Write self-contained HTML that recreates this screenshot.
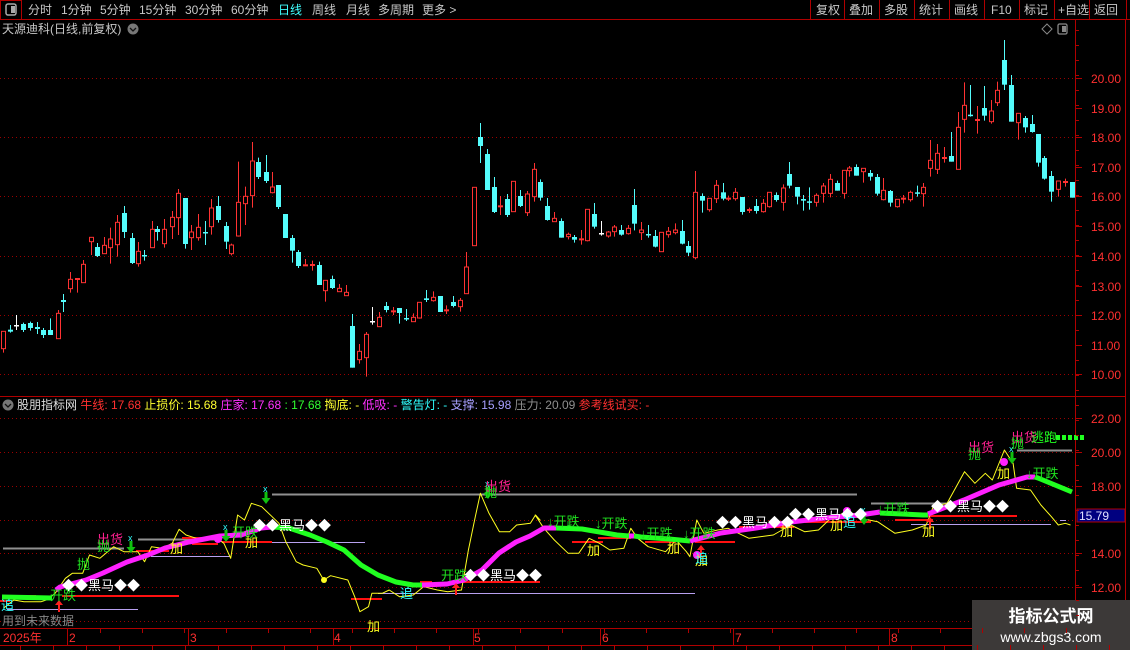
<!DOCTYPE html>
<html><head><meta charset="utf-8">
<style>
html,body{margin:0;padding:0;background:#000;width:1130px;height:650px;overflow:hidden;font-family:"Liberation Sans","Noto Sans CJK SC",sans-serif;}
#wrap{position:relative;width:1130px;height:650px;}
.t{position:absolute;font-size:12px;color:#c8c8c8;white-space:nowrap;line-height:14px;}
svg{position:absolute;left:0;top:0;}
</style></head><body><div id="wrap">
<svg id="s" width="1130" height="650" xmlns="http://www.w3.org/2000/svg" font-family="Liberation Sans, Noto Sans CJK SC, sans-serif">
<!-- frame lines -->
<line x1="0" y1="19.5" x2="1130" y2="19.5" stroke="#b00000"/>
<rect x="0.5" y="0.5" width="21" height="19" fill="none" stroke="#b00000"/>
<rect x="6" y="4" width="10" height="11" rx="2" fill="none" stroke="#aaa" stroke-width="1.5"/>
<rect x="11" y="6" width="4" height="7" fill="#aaa"/>
<g stroke="#b00000"><line x1="810.5" y1="0" x2="810.5" y2="19"/><line x1="844.5" y1="0" x2="844.5" y2="19"/><line x1="879.5" y1="0" x2="879.5" y2="19"/><line x1="914.5" y1="0" x2="914.5" y2="19"/><line x1="949.5" y1="0" x2="949.5" y2="19"/><line x1="984.5" y1="0" x2="984.5" y2="19"/><line x1="1019.5" y1="0" x2="1019.5" y2="19"/><line x1="1054.5" y1="0" x2="1054.5" y2="19"/><line x1="1089.5" y1="0" x2="1089.5" y2="19"/><line x1="1126.5" y1="0" x2="1126.5" y2="19"/></g>
<line x1="1075.5" y1="20" x2="1075.5" y2="628" stroke="#b00000"/>
<line x1="1125.5" y1="20" x2="1125.5" y2="650" stroke="#b00000"/>
<line x1="0" y1="396.5" x2="1126" y2="396.5" stroke="#b00000"/>
<line x1="0" y1="628.5" x2="1130" y2="628.5" stroke="#b00000"/>
<line x1="0" y1="645.5" x2="1130" y2="645.5" stroke="#b00000"/>
<g id="grid" stroke="#9a0000" stroke-dasharray="1,3"></g>
<g id="cd"></g>
<g id="ind"></g>
<!-- top-right icons -->
<path d="M1047 24 L1052 29 L1047 34 L1042 29 Z" fill="none" stroke="#888"/>
<rect x="1058" y="24" width="9" height="10" rx="1.5" fill="none" stroke="#888" stroke-width="1.3"/><rect x="1062" y="26" width="4" height="6" fill="#888"/>
<circle cx="133" cy="29" r="5.5" fill="#777"/><path d="M130 28 L133 31 L136 28" stroke="#111" fill="none" stroke-width="1.3"/>
<circle cx="8" cy="405" r="5.5" fill="#777"/><path d="M5 404 L8 407 L11 404" stroke="#111" fill="none" stroke-width="1.3"/>
<!-- price box -->
<rect x="1077" y="509" width="48" height="13" fill="#000080" stroke="#b00000"/>
<text x="1079" y="520" font-size="12" fill="#e0e0ff">15.79</text>
<!-- watermark -->
<rect x="972" y="600" width="158" height="50" fill="#3c3938"/>
<text x="1051" y="622" font-size="17" font-weight="bold" fill="#fff" text-anchor="middle">指标公式网</text>
<text x="1051" y="642" font-size="14" fill="#fff" text-anchor="middle">www.zbgs3.com</text>
</svg>
<div class="t" style="left:28px;top:3px">分时</div>
<div class="t" style="left:61px;top:3px">1分钟</div>
<div class="t" style="left:100px;top:3px">5分钟</div>
<div class="t" style="left:139px;top:3px">15分钟</div>
<div class="t" style="left:185px;top:3px">30分钟</div>
<div class="t" style="left:231px;top:3px">60分钟</div>
<div class="t" style="left:278px;top:3px;color:#40ffff">日线</div>
<div class="t" style="left:312px;top:3px">周线</div>
<div class="t" style="left:346px;top:3px">月线</div>
<div class="t" style="left:378px;top:3px">多周期</div>
<div class="t" style="left:422px;top:3px">更多 &gt;</div>
<div class="t" style="left:816px;top:3px">复权</div>
<div class="t" style="left:849px;top:3px">叠加</div>
<div class="t" style="left:884px;top:3px">多股</div>
<div class="t" style="left:919px;top:3px">统计</div>
<div class="t" style="left:954px;top:3px">画线</div>
<div class="t" style="left:991px;top:3px">F10</div>
<div class="t" style="left:1024px;top:3px">标记</div>
<div class="t" style="left:1058px;top:3px">+自选</div>
<div class="t" style="left:1094px;top:3px">返回</div>
<div class="t" style="left:2px;top:22px">天源迪科(日线,前复权)</div>
<div class="t" style="left:17px;top:398px;color:#ddd">股朋指标网 <span style="color:#ff3030">牛线: 17.68</span> <span style="color:#ffff30">止损价: 15.68</span> <span style="color:#ff30ff">庄家: 17.68</span> <span style="color:#30ff30">: 17.68</span> <span style="color:#ffff30">掏底: -</span> <span style="color:#ff30ff">低吸: -</span> <span style="color:#30ffff">警告灯: -</span> <span style="color:#a8a0ff">支撑: 15.98</span> <span style="color:#909090">压力: 20.09</span> <span style="color:#ff3030">参考线试买: -</span></div>
<div class="t" style="left:2px;top:614px;color:#888">用到未来数据</div>
<div class="t" style="left:3px;top:631px;color:#ff3030">2025年</div>
<div class="t" style="left:69px;top:631px;color:#ff3030">2</div>
<div class="t" style="left:190px;top:631px;color:#ff3030">3</div>
<div class="t" style="left:334px;top:631px;color:#ff3030">4</div>
<div class="t" style="left:474px;top:631px;color:#ff3030">5</div>
<div class="t" style="left:602px;top:631px;color:#ff3030">6</div>
<div class="t" style="left:735px;top:631px;color:#ff3030">7</div>
<div class="t" style="left:891px;top:631px;color:#ff3030">8</div>
<script>
var NS="http://www.w3.org/2000/svg";
function el(p,n,a,txt){var e=document.createElementNS(NS,n);for(var k in a)e.setAttribute(k,a[k]);if(txt)e.textContent=txt;p.appendChild(e);return e;}
var S=document.getElementById('s');
var G=document.getElementById('grid');
[78,137,196,256,315,374].forEach(function(y){el(G,'line',{x1:0,x2:1075,y1:y+.5,y2:y+.5});});
[418,452,486,520,553,587,621].forEach(function(y){el(G,'line',{x1:0,x2:1075,y1:y+.5,y2:y+.5});});
// axis labels
var lab=[["20.00",78],["19.00",108],["18.00",137],["17.00",167],["16.00",196],["15.00",226],["14.00",256],["13.00",286],["12.00",315],["11.00",345],["10.00",374],["22.00",418],["20.00",452],["18.00",486],["14.00",553],["12.00",587]];
lab.forEach(function(l){el(S,'text',{x:1091,y:l[1]+5,'font-size':12,fill:'#ff3030'},l[0]);el(S,'line',{x1:1076,x2:1082,y1:l[1]+.5,y2:l[1]+.5,stroke:'#b00000'});});
for(var y=30;y<625;y+=15){el(S,'line',{x1:1076,x2:1079,y1:y+.5,y2:y+.5,stroke:'#b00000'});}
for(var x=100;x<1075;x+=42){el(S,'line',{x1:x+.5,x2:x+.5,y1:628,y2:633,stroke:'#b00000'});}
[67,188,333,473,600,733,889].forEach(function(x){el(S,'line',{x1:x+.5,x2:x+.5,y1:628,y2:645,stroke:'#b00000'});});
for(var x=20;x<1130;x+=33){el(S,'line',{x1:x+.5,x2:x+.5,y1:645,y2:650,stroke:'#b00000'});}
var C=document.getElementById('cd');
var Z6=[[10,'r',634,686,634,698],[30,'c',629,635,615,638],[47,'w',615,617,585,630],[68,'c',612,630,608,636],[88,'c',609,624,605,632],[106,'c',621,627,606,642],[126,'c',630,645,624,654],[146,'c',630,645,595,645],[167,'r',580,656,570,656],[184,'c',540,546,522,576],[204,'r',478,506,456,518],[224,'r',474,478,474,518],[242,'r',433,488,420,488],[263,'r',352,365,352,405],[283,'c',381,408,369,411],[303,'r',376,401,351,401],[320,'r',357,383,323,431],[341,'r',307,374,285,410],[361,'c',279,336,258,354],[382,'c',354,429,339,432],[400,'r',394,431,366,440],[419,'c',405,409,390,422],[440,'r',328,383,303,383],[457,'c',327,336,318,362],[477,'r',328,371,297,383],[498,'r',292,320,273,357],[518,'r',220,293,207,345],[536,'c',234,372,234,386],[556,'r',336,353,315,390],[576,'r',322,353,282,362],[594,'c',336,338,303,375],[614,'r',264,320,237,344],[634,'c',258,300,228,308],[655,'c',318,365,306,387],[672,'r',375,401,371,406],[692,'r',247,348,125,350],[712,'r',229,251,200,315],[731,'r',123,227,66,263],[750,'c',126,171,113,177],[771,'c',156,183,105,189],[791,'r',201,218,156,220],[808,'c',195,261,195,267],[829,'c',282,354,282,354],[849,'c',354,392,345,428],[866,'c',396,438,390,444],[887,'r',433,437,417,437],[907,'r',432,437,422,452],[927,'c',435,495,425,495],[945,'r',481,512,481,545],[965,'c',477,504,467,507],[985,'r',505,515,492,515],[1006,'r',517,527,495,527],[1023,'c',618,743,582,743],[1043,'r',694,719,672,731],[1064,'r',643,713,636,770],[1081,'w',603,605,561,614],[1101,'r',592,620,576,620],[1122,'c',558,570,546,577],[1142,'r',571,575,561,585],[1160,'c',564,579,564,611],[1180,'c',594,597,567,603],[1200,'r',592,605,580,605],[1218,'r',547,594,547,596],[1238,'c',535,540,510,546],[1258,'r',532,542,514,545],[1278,'c',528,576,528,576],[1296,'r',568,571,556,582],[1316,'c',546,558,528,562],[1337,'r',541,560,534,575],[1354,'r',441,521,396,521],[1375,'r',202,377,202,377],[1395,'c',51,78,9,129],[1415,'c',102,210,87,210],[1433,'c',201,276,171,279],[1453,'r',256,259,228,285],[1473,'c',237,285,222,291],[1491,'r',184,275,184,275],[1511,'c',228,258,210,261],[1531,'r',222,278,213,288],[1551,'r',148,230,129,245]];
var Z7=[[30,'c',456,503,448,512],[50,'c',528,570,504,572],[70,'r',565,575,546,575],[90,'c',573,623,565,623],[108,'r',613,620,608,628],[128,'c',621,629,615,638],[148,'r',625,629,600,644],[165,'r',538,632,538,634],[185,'c',552,590,519,596],[205,'w',609,611,573,617],[225,'r',606,618,603,623],[243,'r',591,605,585,620],[263,'c',600,614,585,617],[283,'r',595,611,585,614],[300,'c',525,581,477,601],[320,'r',600,608,576,630],[340,'c',612,614,585,623],[360,'c',618,650,600,652],[378,'r',607,665,607,665],[398,'r',604,614,591,623],[418,'r',600,608,580,613],[436,'c',603,641,570,643],[456,'c',648,668,633,678],[476,'r',487,683,423,688],[496,'c',498,512,490,548],[514,'r',505,539,505,545],[534,'r',466,506,450,519],[554,'c',487,506,459,511],[571,'r',503,508,497,513],[591,'r',487,506,474,512],[611,'c',501,546,501,554],[631,'r',537,542,533,549],[649,'c',528,543,507,551],[669,'r',520,545,507,548],[689,'r',487,530,487,533],[708,'c',495,510,487,515],[727,'r',474,517,463,542],[746,'c',432,467,396,475],[767,'c',471,500,471,523],[785,'c',507,512,495,542],[804,'c',514,518,472,539],[824,'r',496,517,490,530],[844,'r',468,490,459,518],[862,'r',448,490,432,502],[882,'c',459,482,452,482],[902,'r',421,490,421,506],[919,'r',414,422,408,440],[939,'c',411,437,403,437],[959,'r',415,425,415,458],[979,'c',429,440,420,452],[997,'c',441,491,432,497],[1017,'r',481,509,444,511],[1037,'c',483,518,480,530],[1055,'r',508,530,508,533],[1074,'r',503,507,495,520],[1094,'r',487,509,482,515],[1114,'c',487,491,467,500],[1132,'r',472,491,459,530],[1152,'r',391,415,330,440],[1172,'r',370,418,342,432],[1190,'r',381,383,351,398],[1210,'c',378,395,306,395],[1230,'r',292,418,246,418],[1249,'r',226,268,157,308],[1267,'c',254,256,165,260],[1287,'r',267,272,228,311],[1307,'c',234,257,168,272],[1327,'r',243,275,210,281],[1345,'r',181,218,155,228],[1365,'c',90,164,30,180],[1385,'c',165,275,135,275],[1403,'r',250,278,250,329],[1423,'c',264,292,258,308],[1443,'c',282,306,255,308],[1462,'c',312,398,312,410],[1480,'c',384,446,378,449],[1500,'c',438,485,423,515],[1520,'r',453,478,453,500],[1538,'r',453,457,446,470],[1558,'c',456,503,456,503]];
function drawC(d,xo,xs,yo){
 var x=Math.round(xo+d[0]*xs)+.5, bt=yo+d[2]/3, bb=yo+d[3]/3, h=yo+d[4]/3, l=yo+d[5]/3;
 var col=d[1]=='r'?'#ff3232':(d[1]=='c'?'#54fcfc':'#ffffff');
 if(d[1]=='r'){
  el(C,'line',{x1:x,x2:x,y1:h,y2:bt,stroke:col});el(C,'line',{x1:x,x2:x,y1:bb,y2:l,stroke:col});
  if(bb-bt<2) el(C,'rect',{x:x-2.5,y:bt,width:5,height:Math.max(2,bb-bt),fill:col});
  else el(C,'rect',{x:x-2,y:bt,width:4,height:bb-bt,fill:'#000',stroke:col});
 } else {
  el(C,'line',{x1:x,x2:x,y1:h,y2:l,stroke:col});
  el(C,'rect',{x:x-2.5,y:bt,width:5,height:Math.max(1.5,bb-bt),fill:col});
 }
}
Z6.forEach(function(d){drawC(d,0,540/1568,120);});
Z7.forEach(function(d){drawC(d,530,545/1568,30);});
// indicator
var I=document.getElementById('ind');
function pl(pts,col,w){el(I,'polyline',{points:pts,fill:'none',stroke:col,'stroke-width':w,'stroke-linejoin':'round'});}
function hl(x1,x2,y,col,w){el(I,'line',{x1:x1,x2:x2,y1:y,y2:y,stroke:col,'stroke-width':w});}
// horizontal lines
hl(3,124,548.5,'#909090',2);hl(138,220,539.5,'#909090',2);hl(272,857,494.5,'#909090',2);hl(871,947,503.5,'#909090',2);hl(1017,1072,450.5,'#909090',2);
hl(7,138,609.5,'#b8a0f0',1);hl(151,230,556.5,'#b8a0f0',1);hl(241,365,542.5,'#b8a0f0',1);hl(378,695,593.5,'#b8a0f0',1);hl(911,1051,524.5,'#b8a0f0',1);hl(1060,1066,520.5,'#b8a0f0',1);
hl(17,36,596,'#ff1010',2);hl(62,179,596,'#ff1010',2);hl(136,169,551,'#ff1010',2);hl(182,218,538,'#ff1010',2);hl(192,218,544,'#ff1010',2);hl(222,272,542,'#ff1010',2);hl(351,382,599,'#ff1010',2);hl(461,540,582,'#ff1010',2);hl(420,432,582,'#ff1010',2);hl(530,540,582,'#ff1010',2);
hl(572,603,542,'#ff1010',2);hl(598,631,538,'#ff1010',2);hl(645,676,542,'#ff1010',2);hl(695,735,542,'#ff1010',2);hl(739,794,527,'#ff1010',2);hl(805,871,522,'#ff1010',2);hl(895,933,520,'#ff1010',2);hl(926,1017,516,'#ff1010',2);
hl(0,10,601,'#ff1010',2);
// yellow line
var y8=[[10,595],[40,570],[70,575],[120,575],[140,568],[160,550],[190,505],[210,490],[240,490],[260,435],[290,445],[330,410],[360,425],[400,425],[420,455],[440,410],[470,415],[500,400],[520,358],[540,375],[570,385],[600,390],[630,385],[650,400],[670,445],[690,315],[710,330],[730,280],[760,290],[790,320],[810,340],[830,395],[860,455],[880,465],[920,475],[940,510],[960,497],[1010,510],[1030,560],[1045,605],[1070,590],[1080,550],[1110,550],[1130,540],[1160,560],[1200,555],[1230,530],[1270,540],[1300,545],[1340,540],[1360,420],[1380,320],[1395,250],[1420,310],[1450,365],[1480,365],[1500,345],[1540,340],[1555,315],[1568,330]];
var y9=[[15,315],[40,355],[70,390],[110,430],[140,430],[170,385],[200,400],[230,420],[270,415],[290,355],[310,385],[340,410],[390,425],[420,390],[450,425],[460,440],[480,330],[500,370],[540,360],[570,355],[630,385],[700,375],[750,345],[790,365],[830,360],[860,330],[900,310],[950,325],[1000,335],[1050,370],[1100,360],[1140,345],[1160,290],[1200,280],[1250,185],[1280,220],[1310,190],[1330,210],[1365,120],[1390,160],[1400,235],[1440,240],[1470,285],[1500,320],[1520,345],[1540,340],[1555,345]];
var yp=y8.map(function(p){return (p[0]*540/1568).toFixed(1)+','+(410+p[1]/3).toFixed(1);}).concat(y9.map(function(p){return (530+p[0]*545/1568).toFixed(1)+','+(410+p[1]/3).toFixed(1);}));
pl(yp.join(' '),'#ffff20',1);
// thick line segments
pl('2,597 52,598','#20ff20',5);
pl('56,590 60,587 86,580 103,573 127,562 148,555 165,548 189,542 220,536 241,535 261,528 272,527','#ff20ff',5);
pl('272,527 289,528 310,535 327,542 344,550 361,565 378,575 396,582 413,585 422,585','#20ff20',5);
pl('422,585 447,584 464,580 482,570 499,553 516,542 530,536 544,528 556,528','#ff20ff',5);
pl('556,528 582,529 617,535 629,536','#20ff20',5);
pl('629,536 634,536','#ff20ff',5);
pl('634,536 641,537 669,539 690,541','#20ff20',5);
pl('690,541 721,533 756,528 791,522 825,518 860,515 880,512','#ff20ff',5);
pl('880,513 923,515 928,515','#20ff20',5);
pl('928,514 964,500 999,485 1027,477 1035,477','#ff20ff',5);
pl('1035,477 1038,478 1072,492','#20ff20',5);
// dots
el(I,'circle',{cx:218,cy:539,r:4,fill:'#ff20ff'});el(I,'circle',{cx:324,cy:580,r:3,fill:'#ffff20'});
el(I,'circle',{cx:697,cy:555,r:4,fill:'#ff20ff'});el(I,'circle',{cx:1004,cy:462,r:4,fill:'#ff20ff'});el(I,'circle',{cx:847,cy:511,r:4,fill:'#ff20ff'});
// arrows down (green)
function dn(x,y){el(I,'path',{d:'M'+(x-1.5)+' '+(y-8)+'h3v6h3l-4.5,6l-4.5,-6h3z',fill:'#10c010'});el(I,'text',{x:x-3,y:y-8,'font-size':9,fill:'#30ffff'},'x');}
dn(131,549);dn(266,500);dn(488,495);dn(864,521);dn(1012,460);dn(226,538);
// arrows up (red)
function up(x,y){el(I,'path',{d:'M'+x+' '+y+'l-4,5h3v7h2v-7h3z',fill:'#ff2020'});}
up(59,600);up(456,583);up(701,545);up(930,517);
// labels
function tx(x,y,s,c,fs){el(I,'text',{x:x,y:y,'font-size':fs||13,fill:c},s);}
tx(97,544,'出货','#ff2090');tx(97,551,'抛','#20e020');tx(77,569,'抛','#20e020');
tx(485,491,'出货','#ff2090');tx(484,497,'抛','#20e020');
tx(968,452,'出货','#ff2090');tx(968,459,'抛','#20e020');tx(1011,442,'出货','#ff2090');tx(1011,448,'抛','#20e020');
tx(1031,442,'逃跑','#20ff20');
for(var i=0;i<5;i++)el(I,'rect',{x:1056+i*6,y:435,width:4,height:5,fill:'#20ff20'});
tx(62,590,'◆◆黑马◆◆','#ffffff');tx(253,530,'◆◆黑马◆◆','#ffffff');tx(464,580,'◆◆黑马◆◆','#ffffff');tx(716,527,'◆◆黑马◆◆','#ffffff');tx(789,519,'◆◆黑马◆◆','#ffffff');tx(931,511,'◆◆黑马◆◆','#ffffff');
tx(50,600,'开跌','#20e020');tx(441,580,'开跌','#20e020');tx(232,537,'开跌','#20e020');tx(547,526,'↓开跌','#20e020');tx(595,528,'↓开跌','#20e020');tx(640,538,'↓开跌','#20e020');tx(683,538,'↓开跌','#20e020');tx(877,513,'↓开跌','#20e020');tx(1026,478,'↓开跌','#20e020');
tx(170,553,'加','#ffff20');tx(245,547,'加','#ffff20');tx(367,631,'加','#ffff20');tx(587,555,'加','#ffff20');tx(667,553,'加','#ffff20');tx(695,565,'加','#ffff20');tx(780,536,'加','#ffff20');tx(830,530,'加','#ffff20');tx(922,536,'加','#ffff20');tx(997,478,'加','#ffff20');
tx(1,610,'追','#30ffff');tx(400,598,'追','#30ffff');tx(843,527,'追','#30ffff');tx(695,563,'追','#30ffff');
</script>
</div></body></html>
